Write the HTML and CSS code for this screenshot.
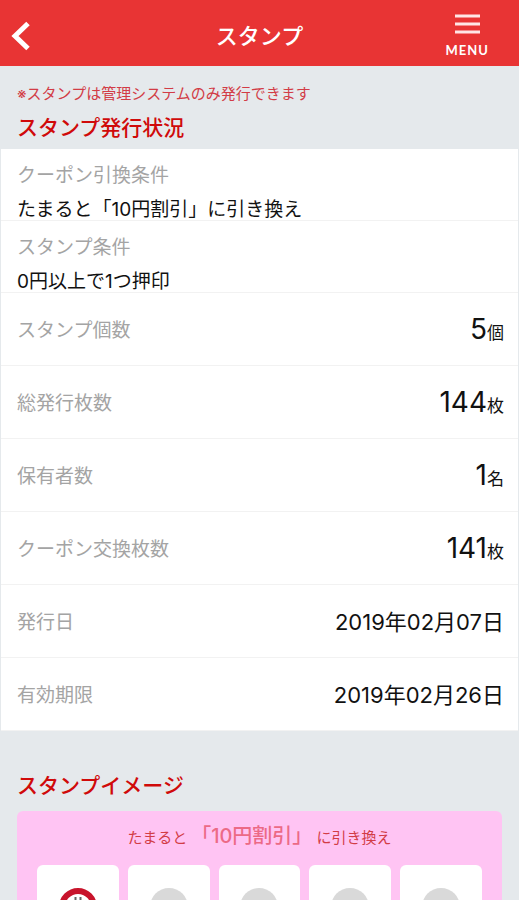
FILE: index.html
```html
<!DOCTYPE html>
<html lang="ja">

<head>
    <meta charset="UTF-8">
    <meta name="viewport" content="width=device-width, initial-scale=1">
    <title>スタンプ</title>
    <link rel="stylesheet" href="styles.css">
</head>

<body>
    <div class="app">
        <!-- ヘッダー -->
        <header class="header">
            <a href="#" class="back" aria-label="戻る">
                <svg width="20" height="30" viewBox="0 0 20 30">
                    <path d="M18 2.500L5 15L18 27.500" fill="none" stroke="#fff" stroke-width="5" />
                </svg>
            </a>
            <h1 class="header-title">スタンプ</h1>
            <button type="button" class="menu">
                <svg width="25" height="20" viewBox="0 0 25 20">
                    <path d="M0 2H25M0 10H25M0 18H25" stroke="#ffe6e6" stroke-width="3" />
                </svg>
                <span>MENU</span>
            </button>
        </header>

        <main class="main">
            <!-- 発行状況 -->
            <section class="status">
                <p class="note">※スタンプは管理システムのみ発行できます</p>
                <h2 class="heading">スタンプ発行状況</h2>
            </section>
            <dl class="list">
                <div class="row row-stack">
                    <dt>クーポン引換条件</dt>
                    <dd>たまると「10円割引」に引き換え</dd>
                </div>
                <div class="row row-stack">
                    <dt>スタンプ条件</dt>
                    <dd>0円以上で1つ押印</dd>
                </div>
                <div class="row">
                    <dt>スタンプ個数</dt>
                    <dd class="count">5<small>個</small></dd>
                </div>
                <div class="row">
                    <dt>総発行枚数</dt>
                    <dd class="count">144<small>枚</small></dd>
                </div>
                <div class="row">
                    <dt>保有者数</dt>
                    <dd class="count">1<small>名</small></dd>
                </div>
                <div class="row">
                    <dt>クーポン交換枚数</dt>
                    <dd class="count">141<small>枚</small></dd>
                </div>
                <div class="row">
                    <dt>発行日</dt>
                    <dd class="date">2019年02月07日</dd>
                </div>
                <div class="row">
                    <dt>有効期限</dt>
                    <dd class="date">2019年02月26日</dd>
                </div>
            </dl>

            <!-- スタンプイメージ -->
            <section class="image">
                <h2 class="heading">スタンプイメージ</h2>
                <div class="card">
                    <p class="card-title">たまると<strong>「10円割引」</strong>に引き換え</p>
                    <ul class="stamps">
                        <li class="stamp">
                            <svg width="38" height="38" viewBox="0 0 38 38">
                                <circle cx="19" cy="19" r="16" fill="#fff" stroke="#c8142c" stroke-width="6" />
                                <path d="M16.500 9v3M21.500 9v3" stroke="#666" stroke-width="2" />
                            </svg>
                        </li>
                        <li class="stamp"><span class="dot"></span></li>
                        <li class="stamp"><span class="dot"></span></li>
                        <li class="stamp"><span class="dot"></span></li>
                        <li class="stamp"><span class="dot"></span></li>
                    </ul>
                </div>
            </section>
        </main>
    </div>
</body>

</html>
```

FILE: styles.css
```css
* {
    box-sizing: border-box;
    margin: 0;
    padding: 0;
}

body {
    font-family: Inter, "Noto Sans CJK JP", sans-serif;
    color: #111;
    background: #e5e9ec;
}

.app {
    display: flex;
    flex-direction: column;
    height: 100vh;
}

.header {
    display: grid;
    grid-template-columns: 1fr auto 1fr;
    align-items: center;
    flex: none;
    height: 66px;
    padding: 5px 30px 0 10px;
    background: #e83434;
    color: #fff;
}

.back {
    justify-self: start;
    display: flex;
}

.header-title {
    padding-left: 20px;
    font-size: 22px;
    font-weight: 500;
    line-height: 32px;
}

.menu {
    justify-self: end;
    display: flex;
    flex-direction: column;
    align-items: center;
    gap: 8px;
    border: 0;
    background: none;
    color: #fff;
    font: 700 13px/16px Lato, sans-serif;
    letter-spacing: 1px;
    cursor: pointer;
}

.main {
    flex: 1;
    overflow-y: auto;
    scrollbar-width: none;
}

.status {
    padding: 16px 17px 4px;
}

.note {
    margin-bottom: 5px;
    font-size: 15px;
    line-height: 24px;
    color: #d23c46;
}

.heading {
    font-size: 21px;
    font-weight: 500;
    line-height: 34px;
    color: #d00a0a;
}

.list {
    margin: 0 1px;
    background: #fff;
}

.row {
    display: flex;
    justify-content: space-between;
    align-items: center;
    height: 73px;
    padding: 0 14px 0 16px;
    border-bottom: 1px solid #f2f2f2;
    font-size: 19px;
}

.row dt {
    padding-bottom: 2px;
    color: #a4a4a4;
}

.row-stack {
    flex-direction: column;
    align-items: flex-start;
    height: 72px;
    padding-top: 10px;
    line-height: 34px;
}

.row-stack dt {
    padding-bottom: 0;
}

.count {
    font-size: 28px;
}

.count small {
    font-size: 17px;
}

.date {
    padding-bottom: 2px;
    font-size: 22px;
}

.image {
    padding: 38px 17px;
}

.card {
    margin-top: 8px;
    padding: 8px 20px 20px;
    border-radius: 6px;
    background: #ffc4f3;
}

.card-title {
    font-size: 15px;
    line-height: 34px;
    text-align: center;
    color: #d23c46;
}

.card-title strong {
    margin: 0 4px;
    font-size: 20px;
    font-weight: 500;
    color: #ec6a86;
}

.stamps {
    display: grid;
    grid-template-columns: repeat(5, 1fr);
    gap: 9px;
    margin-top: 10px;
    list-style: none;
}

.stamp {
    display: flex;
    justify-content: center;
    height: 84px;
    padding-top: 23px;
    border-radius: 6px;
    background: #fff;
}

.dot {
    width: 38px;
    height: 38px;
    border-radius: 50%;
    background: #d9d9d9;
}
```
